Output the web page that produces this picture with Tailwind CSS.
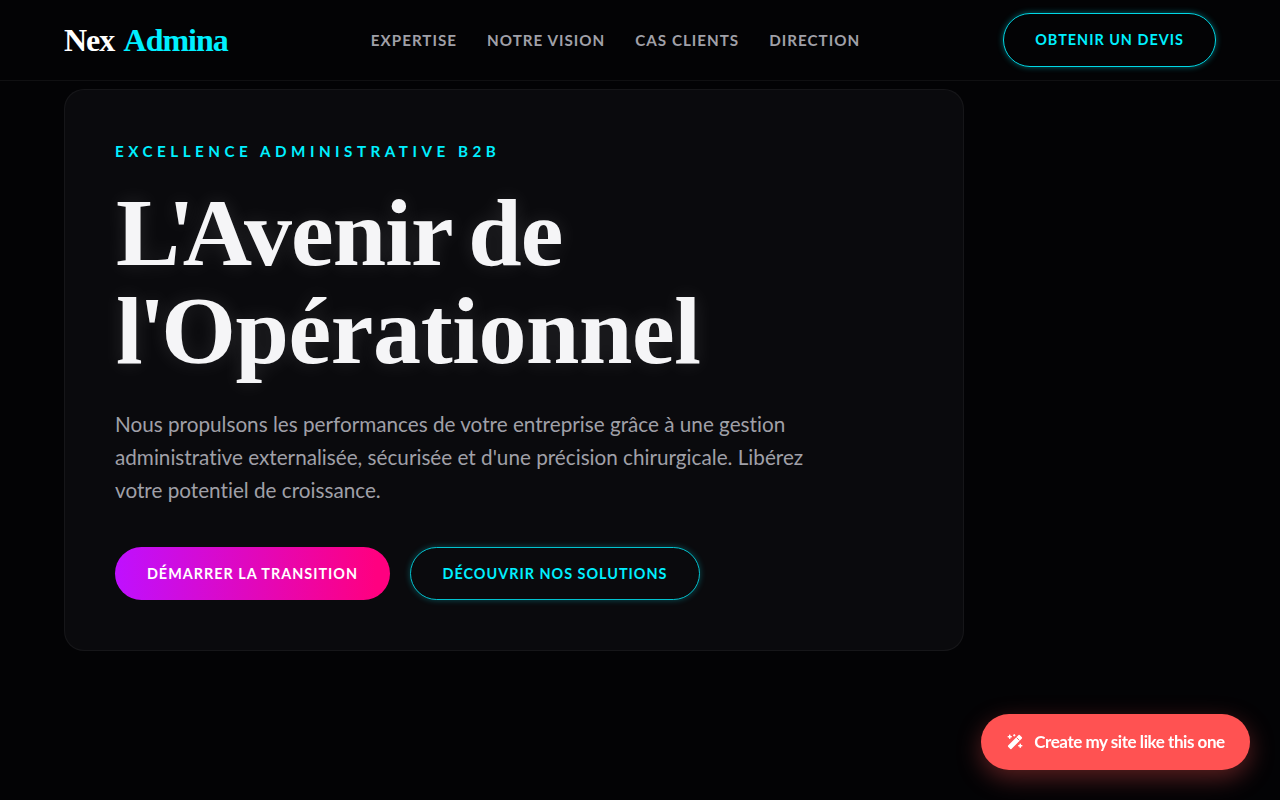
<!DOCTYPE html>
<html lang="fr">
<head>
<meta charset="utf-8">
<title>Nex Admina</title>
<script src="https://cdn.jsdelivr.net/npm/@tailwindcss/browser@4"></script>
</head>
<body class="bg-[#030305] text-white font-['Lato',sans-serif] [font-variant-ligatures:none] h-screen overflow-hidden">

<header class="h-[81px] border-b border-white/5 px-16 flex items-center justify-between">
    <div class="w-[164px] font-['Liberation_Serif',serif] font-bold text-[32px] tracking-[-1px] [word-spacing:4px] whitespace-nowrap">Nex <span class="text-[#00f0ff]">Admina</span></div>
    <nav class="flex gap-[30px] text-[15.2px] font-bold tracking-[1px] text-[#a0a0a8]">
        <a>EXPERTISE</a>
        <a>NOTRE VISION</a>
        <a>CAS CLIENTS</a>
        <a>DIRECTION</a>
    </nav>
    <button class="h-[54px] w-[213px] rounded-full border border-[#00f0ff]/90 text-[#00f0ff] text-[14.4px] font-bold tracking-[1px] shadow-[0_0_6px_rgba(0,240,255,0.4)]">OBTENIR UN DEVIS</button>
</header>

<main class="px-16 pt-2">
    <section class="w-[900px] h-[562px] bg-[#0a0a0d] border border-white/5 rounded-[20px] pt-[50px] px-[50px]">
        <p class="text-[15.2px] font-bold tracking-[4.5px] text-[#00f0ff] leading-[22px]">EXCELLENCE ADMINISTRATIVE B2B</p>
        <h1 class="mt-[22px] pl-[1px] font-['Liberation_Serif',serif] font-bold text-[96px] leading-[98px] text-[#f5f5f7] [text-shadow:0_0_20px_rgba(255,255,255,0.12)] whitespace-nowrap">
            <span class="tracking-[-12px]">L'</span><span class="tracking-[-0.9px] [word-spacing:-6px]">Avenir de</span><br>
            <span class="tracking-[-4px]">l'</span><span class="tracking-[-0.4px]">Opérationnel</span>
        </h1>
        <p class="mt-[28px] w-[720px] text-[20.7px] leading-[33px] text-[#a0a0a8]">Nous propulsons les performances de votre entreprise grâce à une gestion administrative externalisée, sécurisée et d'une précision chirurgicale. Libérez votre potentiel de croissance.</p>
        <div class="mt-[40px] flex gap-5">
            <button class="h-[53px] w-[275px] rounded-full bg-[linear-gradient(90deg,#bf10ff,#ff0080_95%)] text-[14.4px] font-bold tracking-[1px]">DÉMARRER LA TRANSITION</button>
            <button class="h-[53px] w-[290px] rounded-full border border-[#00f0ff]/80 text-[#00f0ff] text-[14.4px] font-bold tracking-[1px] shadow-[0_0_6px_rgba(0,240,255,0.3)]">DÉCOUVRIR NOS SOLUTIONS</button>
        </div>
    </section>
</main>

<button class="fixed right-[30px] bottom-[30px] h-14 w-[269px] rounded-full bg-[#ff5252] flex items-center justify-center gap-2.5 text-[17px] font-bold tracking-[-0.45px] shadow-[0_8px_24px_rgba(255,82,82,0.35)]">
    <svg class="w-[18px] h-[18px]" viewBox="0 0 24 24" fill="none" stroke="currentColor" stroke-linecap="round" stroke-linejoin="round">
        <path d="M20.5 6.5 6.5 20.5 3.5 17.5 17.5 3.5Z" fill="currentColor" stroke-width="2"/>
        <path d="m14.5 6.5 3 3" stroke="#ff5252" stroke-width="1.2"/>
        <path d="M5 3v4M3 5h4M19 15v4M17 17h4" stroke-width="2"/>
        <path d="M11 2v2M10 3h2" stroke-width="1.5"/>
    </svg>
    Create my site like this one
</button>

</body>
</html>
